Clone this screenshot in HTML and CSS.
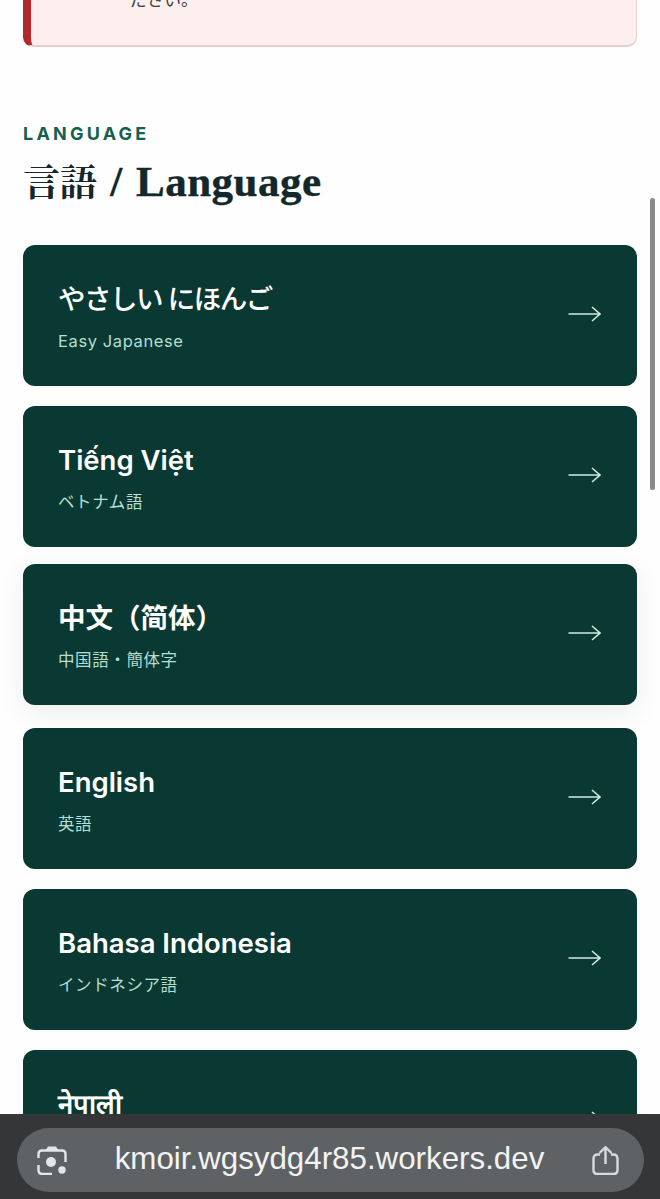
FILE: index.html
```html
<!DOCTYPE html>
<html lang="ja">
<head>
  <meta charset="UTF-8" />
  <title>言語 / Language</title>
  <meta name="viewport" content="width=device-width, initial-scale=1.0"/>
  <link rel="stylesheet" href="styles.css">
</head>
<body>
  <!-- Notice, scrolled mostly out of view -->
  <div class="notice">
    <p class="notice-text">ださい。</p>
  </div>

  <!-- Language Section -->
  <section class="language">
    <p class="eyebrow">LANGUAGE</p>
    <h2 class="heading"><span class="heading-ja">言語</span> / Language</h2>

    <div class="lang-list">
      <a class="lang-card" href="#">
        <span class="lang-text">
          <span class="lang-name lang-name-kana">やさしい にほんご</span>
          <span class="lang-sub">Easy Japanese</span>
        </span>
        <svg class="lang-arrow" viewBox="0 0 34 18"><path d="M1.5 9H33M25 2L33 9L25 16"/></svg>
      </a>
      <a class="lang-card" href="#">
        <span class="lang-text">
          <span class="lang-name">Tiếng Việt</span>
          <span class="lang-sub">ベトナム語</span>
        </span>
        <svg class="lang-arrow" viewBox="0 0 34 18"><path d="M1.5 9H33M25 2L33 9L25 16"/></svg>
      </a>
      <a class="lang-card lang-card-active" href="#">
        <span class="lang-text">
          <span class="lang-name" lang="zh-CN">中文（简体）</span>
          <span class="lang-sub">中国語・簡体字</span>
        </span>
        <svg class="lang-arrow" viewBox="0 0 34 18"><path d="M1.5 9H33M25 2L33 9L25 16"/></svg>
      </a>
      <a class="lang-card" href="#">
        <span class="lang-text">
          <span class="lang-name">English</span>
          <span class="lang-sub">英語</span>
        </span>
        <svg class="lang-arrow" viewBox="0 0 34 18"><path d="M1.5 9H33M25 2L33 9L25 16"/></svg>
      </a>
      <a class="lang-card" href="#">
        <span class="lang-text">
          <span class="lang-name">Bahasa Indonesia</span>
          <span class="lang-sub">インドネシア語</span>
        </span>
        <svg class="lang-arrow" viewBox="0 0 34 18"><path d="M1.5 9H33M25 2L33 9L25 16"/></svg>
      </a>
      <a class="lang-card" href="#">
        <span class="lang-text">
          <span class="lang-name">नेपाली</span>
          <span class="lang-sub">ネパール語</span>
        </span>
        <svg class="lang-arrow" viewBox="0 0 34 18"><path d="M1.5 9H33M25 2L33 9L25 16"/></svg>
      </a>
    </div>
  </section>

  <!-- Page scrollbar -->
  <div class="scroll-thumb"></div>

  <!-- Browser address bar -->
  <div class="browser-bar">
    <div class="url-pill">
      <svg class="bar-icon" viewBox="0 0 30 29">
        <path class="bar-dot" d="M8.5 4.5L11 0.5H19L21.5 4.5Z" />
        <path d="M1.5 12V8Q1.5 4.5 5 4.5H25Q28.5 4.5 28.5 8V16M1.5 19V24Q1.5 28 5.5 28H15" />
        <circle class="bar-dot" cx="14" cy="16" r="5" />
        <circle class="bar-dot" cx="25" cy="24" r="3.7" />
      </svg>
      <span class="url-text">kmoir.wgsydg4r85.workers.dev</span>
      <svg class="bar-icon bar-icon-share" viewBox="0 0 27 29">
        <path d="M13.5 18V1.5M7.5 7L13.5 1.2L19.5 7" />
        <path d="M8 8.5H5.5Q1.5 8.5 1.5 12.5V24Q1.5 28 5.5 28H21.5Q25.5 28 25.5 24V12.5Q25.5 8.5 21.5 8.5H19" />
      </svg>
    </div>
  </div>
</body>
</html>
```

FILE: styles.css
```css
html, body {
  margin: 0;
  height: 1199px;
  overflow: hidden;
}
body {
  background-color: #fefefe;
  color: #14272a;
  font-family: 'Inter', 'Noto Sans CJK JP', sans-serif;
  padding: 0 23px;
  position: relative;
}
.notice {
  height: 107px;
  margin-top: -60px;
  box-sizing: border-box;
  background-color: #fdefed;
  border: 1px solid #e3cfcd;
  border-bottom-width: 2px;
  border-left: 8px solid #b3272d;
  border-radius: 10px;
  padding: 47px 0 0 99px;
}
.notice-text {
  margin: 0;
  font-size: 17px;
  line-height: 24px;
  color: #3a3f40;
}
.language {
  margin-top: 77px;
}
.eyebrow {
  margin: 0;
  font-size: 18px;
  line-height: 20px;
  font-weight: 700;
  letter-spacing: 3.2px;
  color: #15604f;
}
.heading {
  margin: 13px 0 0;
  font-family: 'Liberation Serif', 'Noto Serif CJK JP', 'Noto Sans CJK JP', serif;
  font-size: 43px;
  line-height: 50px;
  font-weight: 700;
  letter-spacing: 0.5px;
  word-spacing: 2px;
  -webkit-text-stroke: 0.4px #14272a;
  color: #14272a;
}
.heading-ja {
  font-size: 37px;
  letter-spacing: 0;
  -webkit-text-stroke: 0;
}
.lang-list {
  margin-top: 36px;
  display: flex;
  flex-direction: column;
  gap: 20px;
}
.lang-card {
  height: 141px;
  box-sizing: border-box;
  background-color: #0a3933;
  border-radius: 12px;
  padding: 0 36px 0 35px;
  display: flex;
  align-items: center;
  justify-content: space-between;
  text-decoration: none;
  flex-shrink: 0;
}
.lang-card-active {
  transform: translateY(-3px);
  box-shadow: 0 8px 28px rgba(11, 59, 54, 0.08);
}
.lang-text {
  display: flex;
  flex-direction: column;
  gap: 12px;
  padding-top: 3px;
}
.lang-name {
  font-size: 27.5px;
  line-height: 36px;
  font-weight: 600;
  color: #ffffff;
}
.lang-name-kana {
  letter-spacing: -1.5px;
  font-weight: 500;
}
.lang-sub {
  font-size: 16.5px;
  line-height: 24px;
  letter-spacing: 0.6px;
  color: #b5dfd2;
}
.lang-arrow {
  width: 34px;
  height: 18px;
  margin-bottom: 4px;
  fill: none;
  stroke: #cdeadf;
  stroke-width: 1.6;
}
.scroll-thumb {
  position: absolute;
  top: 198px;
  right: 5px;
  width: 5px;
  height: 292px;
  border-radius: 3px;
  background-color: #8a8a8a;
}
.browser-bar {
  position: absolute;
  left: 0;
  right: 0;
  bottom: 0;
  height: 85px;
  background-color: #343637;
  box-sizing: border-box;
  padding: 14px 16px 0 17px;
}
.url-pill {
  height: 64px;
  border-radius: 32px;
  background-color: #5f6265;
  display: flex;
  align-items: center;
  justify-content: space-between;
  padding: 0 25px 0 20px;
}
.url-text {
  font-family: 'Liberation Sans', sans-serif;
  font-size: 31.3px;
  color: #f2f3f3;
  margin-bottom: 2px;
}
.bar-icon {
  width: 30px;
  height: 29px;
  fill: none;
  stroke: #e4e5e6;
  stroke-width: 2.4;
}
.bar-icon-share {
  width: 27px;
  stroke: #d8dadb;
}
.bar-dot {
  fill: #e4e5e6;
  stroke: none;
}
```
